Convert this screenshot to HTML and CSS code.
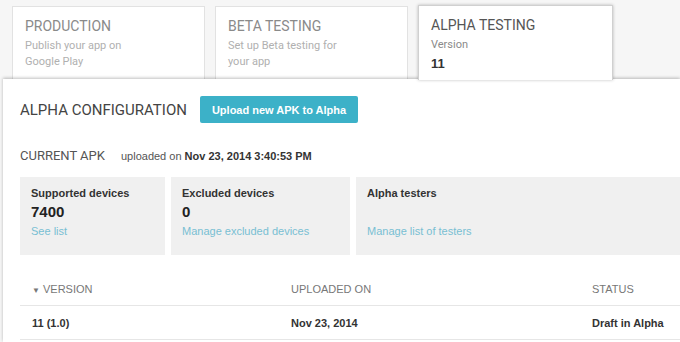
FILE: index.html
```html
<!DOCTYPE html>
<html lang="en">
<head>
  <meta charset="UTF-8">
  <title>APK - Alpha testing</title>
  <link rel="stylesheet" href="styles.css">
</head>
<body>
  <nav class="tabs">
    <a class="tab">
      <span class="tab-title">PRODUCTION</span>
      <span class="tab-sub">Publish your app on<br>Google Play</span>
    </a>
    <a class="tab">
      <span class="tab-title">BETA TESTING</span>
      <span class="tab-sub">Set up Beta testing for<br>your app</span>
    </a>
    <a class="tab active">
      <span class="tab-title">ALPHA TESTING</span>
      <span class="tab-sub">Version</span>
      <span class="tab-version">11</span>
    </a>
  </nav>

  <main class="panel">
    <div class="config-head">
      <h2>ALPHA CONFIGURATION</h2>
      <button class="btn-upload">Upload new APK to Alpha</button>
    </div>

    <div class="current">
      <h3>CURRENT APK</h3>
      <span class="uploaded">uploaded on <b>Nov 23, 2014 3:40:53 PM</b></span>
    </div>

    <div class="cards">
      <div class="card c1">
        <div class="card-label">Supported devices</div>
        <div class="card-value">7400</div>
        <a class="card-link">See list</a>
      </div>
      <div class="card c2">
        <div class="card-label">Excluded devices</div>
        <div class="card-value">0</div>
        <a class="card-link">Manage excluded devices</a>
      </div>
      <div class="card c3">
        <div class="card-label">Alpha testers</div>
        <div class="card-value"></div>
        <a class="card-link">Manage list of testers</a>
      </div>
    </div>

    <table class="apks">
      <thead>
        <tr>
          <th class="col-version"><span class="arrow">&#9660;</span> VERSION</th>
          <th class="col-date">UPLOADED ON</th>
          <th class="col-status">STATUS</th>
        </tr>
      </thead>
      <tbody>
        <tr>
          <td>11 (1.0)</td>
          <td>Nov 23, 2014</td>
          <td>Draft in Alpha</td>
        </tr>
      </tbody>
    </table>
  </main>
</body>
</html>
```

FILE: styles.css
```css
/* Console - pagina APK */
body {
  margin: 0;
  font-family: "Liberation Sans", Arial, sans-serif;
  background: #f6f6f6;
  color: #333;
  height: 342px;
  overflow: hidden;
}
.tabs {
  display: flex;
  gap: 10px;
  padding: 6px 0 0 12px;
  height: 73px;
  align-items: flex-end;
}
.tab {
  box-sizing: border-box;
  width: 193px;
  height: 73px;
  padding: 10px 12px 0;
  background: #fff;
  border: 1px solid #e2e2e2;
  border-bottom: none;
  display: flex;
  flex-direction: column;
  cursor: pointer;
}
.tab.active {
  width: 195px;
  height: 75px;
  margin-bottom: -1px;
  position: relative;
  z-index: 2;
  border-color: #d0d0d0;
  box-shadow: 0 0 3px rgba(0,0,0,0.25);
}
.tab-title {
  font-family: Roboto, "Liberation Sans", sans-serif;
  font-size: 14px;
  color: #8a8a8a;
  line-height: 18px;
}
.tab-sub {
  font-family: Roboto, "Liberation Sans", sans-serif;
  font-size: 11px;
  color: #b0b0b0;
  line-height: 16px;
  margin-top: 3px;
}
.tab.active .tab-title { color: #555; }
.tab.active .tab-sub { color: #8a8a8a; }
.tab-version {
  font-size: 13px;
  font-weight: bold;
  color: #333;
  margin-top: 3px;
}
.panel {
  position: relative;
  z-index: 1;
  margin-left: 3px;
  background: #fff;
  box-shadow: 0 -1px 3px rgba(0,0,0,0.25);
  padding: 17px 0 0 17px;
  height: 246px;
  overflow: hidden;
}
.config-head {
  display: flex;
  align-items: center;
  gap: 13px;
}
h2 {
  margin: 0;
  font-family: Roboto, "Liberation Sans", sans-serif;
  font-weight: normal;
  font-size: 15px;
  color: #444;
}
.btn-upload {
  background: #3cb1c8;
  color: #fff;
  border: none;
  border-radius: 2px;
  font-family: "Liberation Sans", Arial, sans-serif;
  font-weight: bold;
  font-size: 11px;
  height: 27px;
  padding: 0 12px;
}
.current {
  display: flex;
  align-items: baseline;
  gap: 16px;
  margin-top: 25px;
}
h3 {
  margin: 0;
  font-family: Roboto, "Liberation Sans", sans-serif;
  font-weight: normal;
  font-size: 13px;
  color: #555;
}
.uploaded {
  font-size: 11px;
  color: #555;
}
.uploaded b { color: #333; }
.cards {
  display: flex;
  gap: 6px;
  margin-top: 14px;
}
.card {
  box-sizing: border-box;
  height: 78px;
  background: #f0f0f0;
  padding: 10px 11px;
}
.c1 { width: 145px; }
.c2 { width: 179px; }
.c3 { flex: 1; }
.card-label {
  font-size: 11px;
  font-weight: bold;
  color: #333;
}
.card-value {
  font-size: 15px;
  font-weight: bold;
  color: #222;
  height: 19px;
  margin-top: 4px;
}
.card-link {
  display: block;
  font-size: 11px;
  color: #78bfd3;
  margin-top: 3px;
  cursor: pointer;
}
.apks {
  width: 100%;
  margin-top: 17px;
  border-collapse: collapse;
}
.apks th, .apks td {
  text-align: left;
  padding: 0 12px;
  border-bottom: 1px solid #e6e6e6;
  font-size: 11px;
}
.apks th {
  font-weight: normal;
  color: #777;
  height: 33px;
  vertical-align: middle;
}
.apks td {
  height: 33px;
  font-weight: bold;
  color: #333;
}
.col-version { width: 235px; }
.col-date { width: 277px; }
.arrow { font-size: 8px; }
```
